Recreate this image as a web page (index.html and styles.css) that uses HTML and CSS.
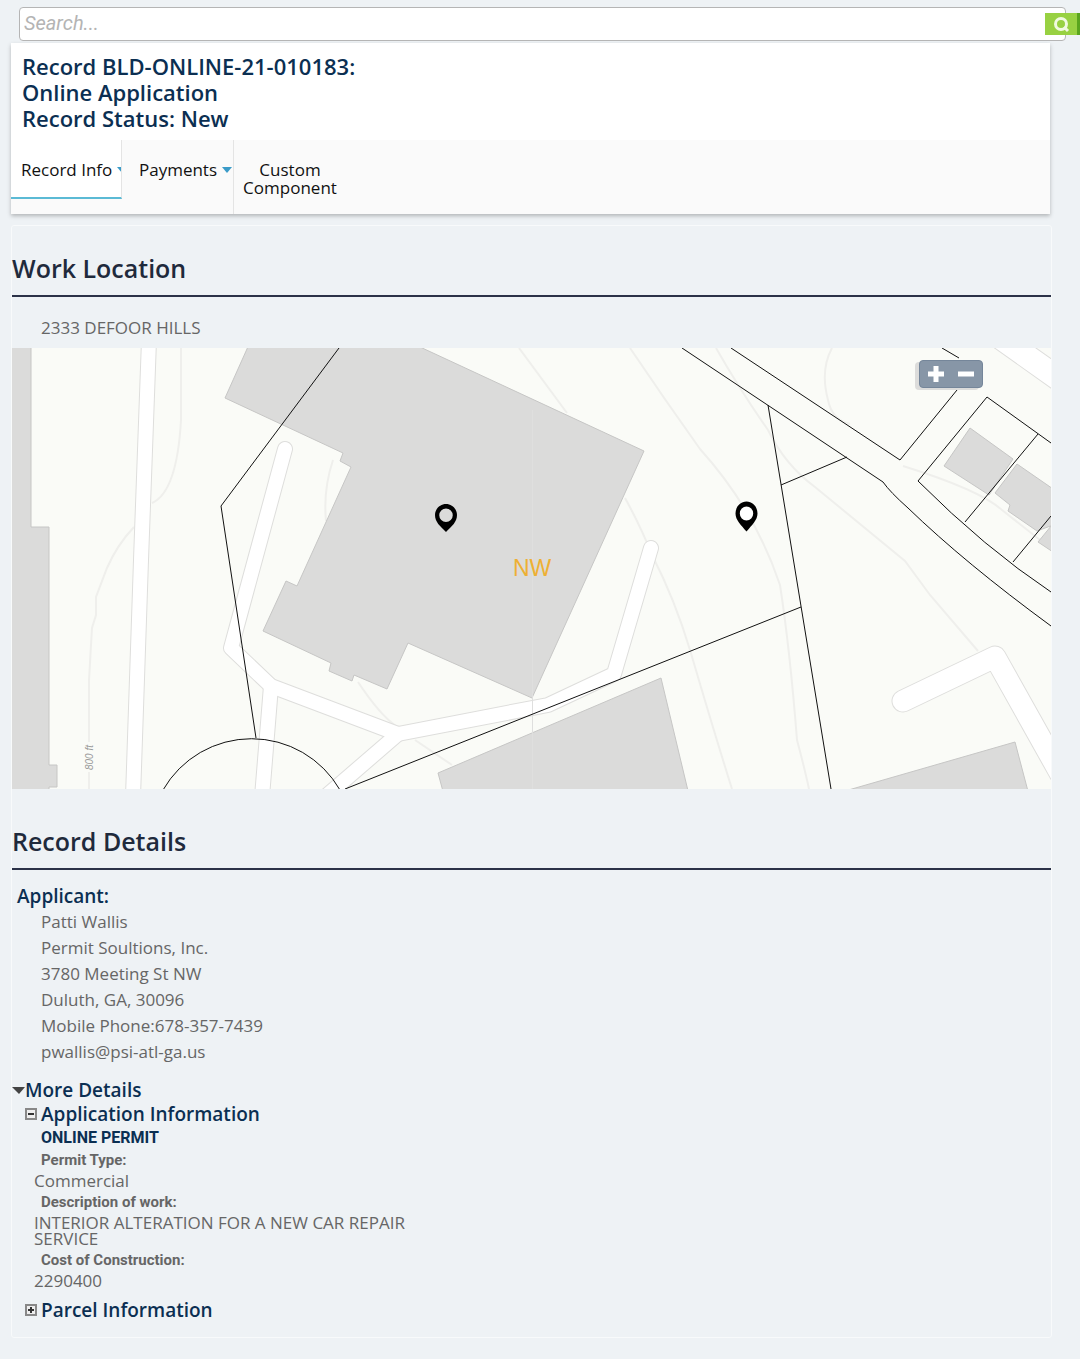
FILE: index.html
```html
<!DOCTYPE html>
<html lang="en">
<head>
  <meta charset="UTF-8">
  <meta name="viewport" content="width=device-width, initial-scale=1">
  <title>Record BLD-ONLINE-21-010183</title>
  <link rel="stylesheet" href="styles.css">
</head>
<body>

  <form class="search" role="search">
    <input type="text" class="search-input" placeholder="Search..." aria-label="Search">
    <button type="button" class="search-btn" aria-label="Search">
      <svg width="18" height="18" viewBox="0 0 18 18"><circle cx="9" cy="9" r="5.500"/><path d="M12 12L16 16"/></svg>
    </button>
  </form>

  <header class="record-header">
    <h1>Record BLD-ONLINE-21-010183:<br>Online Application<br>Record Status: New</h1>
    <nav class="tabs">
      <a href="#info" class="tab active">Record Info<span class="caret"></span></a>
      <a href="#payments" class="tab">Payments<span class="caret"></span></a>
      <a href="#custom" class="tab tab-wrap">Custom Component</a>
    </nav>
  </header>

  <main class="content">
    <section>
      <h2>Work Location</h2>
      <p class="address">2333 DEFOOR HILLS</p>
      <div class="map">
        <svg class="map-canvas" viewBox="12 348 1039 441" preserveAspectRatio="xMidYMid slice" role="img" aria-label="Map of 2333 Defoor Hills">
          <rect class="ground" x="12" y="348" width="1039" height="441"/>

          <!-- contour lines -->
          <g class="contour">
            <path d="M181 348V420Q177 492 152 503"/>
            <path d="M134 527Q117 545 107 568L96 597V615L92 628L89 680V742M89 772V789"/>
            <path d="M333 460Q323 490 326 521"/>
            <path d="M519 348L567 413M625 498Q640 525 653 557Q675 600 690 650Q715 735 732 789"/>
            <path d="M630 348Q665 400 700 449Q755 510 780 585Q790 650 797 740Q805 770 809 789"/>
            <path d="M716 348Q740 390 768 430Q785 465 815 487L905 561L930 595L978 651"/>
            <path d="M832 348Q820 370 828 400Q832 420 850 424M903 466Q980 490 1002 510L1040 540"/>
            <path d="M358 682Q380 715 396 726M415 740L452 765"/>
          </g>

          <!-- streets: grey casing under white fill -->
          <g class="road-edge">
            <path d="M149 340L141 560L133 797" stroke-width="16"/>
            <path d="M285 449L231 648L271 686L398 734L548 705L614 674L651 548" stroke-width="16"/>
            <path d="M271 686L262 797M398 734L325 797" stroke-width="16"/>
            <path d="M903 701L995 657L1060 773" stroke-width="23"/>
            <path d="M990 330L1070 387" stroke-width="25"/>
          </g>
          <g class="road">
            <path d="M149 340L141 560L133 797" stroke-width="14"/>
            <path d="M285 449L231 648L271 686L398 734L548 705L614 674L651 548" stroke-width="14"/>
            <path d="M271 686L262 797M398 734L325 797" stroke-width="14"/>
            <path d="M903 701L995 657L1060 773" stroke-width="21"/>
            <path d="M990 330L1070 387" stroke-width="23"/>
          </g>

          <g class="building">
            <path d="M10 340H31V527H49V765H57V787H49V795H10Z"/>
            <path d="M251 340L225 398L343 453L340 461L351 467L297 586L286 581L263 631L331 663L329 671L352 681L354 675L387 689L408 643L532 698L644 451L405 340Z"/>
            <path d="M444 795L438 773L661 678L689 795Z"/>
            <path d="M845 791L1015 742L1029 795Z"/>
            <path d="M970 428L1013 459L989 495L944 466Z"/>
            <path d="M1017 464L1056 491V524L1037 531L1008 511L1010 505L995 493Z"/>
            <path d="M1056 520L1038 542L1056 554Z"/>
          </g>
          <path class="tile-seam" d="M532.5 410V789"/>

          <!-- parcel boundaries -->
          <g class="parcel">
            <path d="M339 348L221 506L256 738"/>
            <path d="M163 790A102 102 0 0 1 340 790"/>
            <path d="M345 789L801 607"/>
            <path d="M768 405L831 789M781 485L847 457"/>
            <path d="M682 348L883 482Q890 492 908 508Q965 563 1051 626"/>
            <path d="M731 348L900 460L957 390M942 348L959 358"/>
            <path d="M1051 443L987 397L918 481Q985 548 1051 592"/>
            <path d="M1038 434L965 522M1051 516L1013 562"/>
          </g>

          <g class="pin">
            <path fill-rule="evenodd" d="M446 504C440 504 435 509 435 515C435 522 440 526 446 532C452 526 457 522 457 515C457 509 452 504 446 504ZM446 508.500A6.700 6.700 0 1 1 446 522A6.700 6.700 0 1 1 446 508.500Z"/>
            <path class="pin-hole" d="M746 507a7 7 0 1 0 .1 0Z"/>
            <path fill-rule="evenodd" d="M746.500 501.500C740 501.500 735.500 507 735.500 513.500C735.500 520 741 525 746.500 531.500C752 525 757.500 520 757.500 513.500C757.500 507 753 501.500 746.500 501.500ZM746.500 506.500A6.700 7 0 1 1 746.500 520.500A6.700 7 0 1 1 746.500 506.500Z"/>
          </g>
          <text class="quadrant" x="513" y="576">NW</text>
          <text class="elevation" transform="translate(93 770) rotate(-90)">800 ft</text>
        </svg>
        <div class="zoom">
          <button type="button" aria-label="Zoom in"><svg width="18" height="18" viewBox="0 0 18 18"><path d="M1 9H17M9 1V17"/></svg></button>
          <button type="button" aria-label="Zoom out"><svg width="18" height="18" viewBox="0 0 18 18"><path d="M1 9H17"/></svg></button>
        </div>
      </div>
    </section>

    <section class="details">
      <h2>Record Details</h2>
      <h3 class="applicant-title">Applicant:</h3>
      <address class="applicant">
        Patti Wallis<br>
        Permit Soultions, Inc.<br>
        3780 Meeting St NW<br>
        Duluth, GA, 30096<br>
        Mobile Phone:678-357-7439<br>
        pwallis@psi-atl-ga.us
      </address>

      <button type="button" class="toggle more" aria-expanded="true">
        <svg width="13" height="8" viewBox="0 0 13 8"><path d="M0 1H13L7 8Z" fill="#444"/></svg>More Details
      </button>
      <button type="button" class="toggle group" aria-expanded="true">
        <svg width="12" height="12" viewBox="0 0 12 12"><rect class="box" x="1" y="1" width="10" height="10"/><path class="sign" d="M3 6H9"/></svg>Application Information
      </button>
      <div class="app-info">
        <h4>ONLINE PERMIT</h4>
        <dl>
          <dt>Permit Type:</dt>
          <dd>Commercial</dd>
          <dt>Description of work:</dt>
          <dd>INTERIOR ALTERATION FOR A NEW CAR REPAIR SERVICE</dd>
          <dt>Cost of Construction:</dt>
          <dd>2290400</dd>
        </dl>
      </div>
      <button type="button" class="toggle group" aria-expanded="false">
        <svg width="12" height="12" viewBox="0 0 12 12"><rect class="box" x="1" y="1" width="10" height="10"/><path class="sign" d="M3 6H9M6 3V9"/></svg>Parcel Information
      </button>
    </section>
  </main>

</body>
</html>
```
FILE: styles.css
```css
* {
  box-sizing: border-box;
}

body {
  margin: 0;
  padding: 7px 28px 20px 11px;
  background: #eef2f5;
  color: #666;
  font-family: "Open Sans", "Noto Sans", sans-serif;
  font-size: 17px;
}

h1, h2, h3, h4, p, dl, dd {
  margin: 0;
}

button {
  border: 0;
  padding: 0;
  font-family: inherit;
  cursor: pointer;
}

/* search bar, runs a bit past the card on the right */
.search {
  position: relative;
  margin: 0 -14px 2px 8px;
}

.search-input {
  display: block;
  width: 100%;
  height: 34px;
  padding: 0 4px 2px;
  border: 1px solid #b5b5b5;
  border-radius: 4px;
  background: #fff;
  font: italic 20px Roboto, sans-serif;
}

.search-input::placeholder {
  color: #b4b4b4;
}

.search-btn {
  position: absolute;
  top: 6px;
  right: -14px;
  width: 35px;
  height: 22px;
  border-right: 3px solid #5aa51e;
  background: #98d142;
}

.search-btn svg {
  display: block;
  margin: auto;
  fill: none;
  stroke: #f0fae0;
  stroke-width: 3;
}

.record-header {
  margin-right: 2px;
  background: #fff;
  box-shadow: 0 2px 4px rgba(0, 0, 0, 0.25);
}

h1 {
  padding: 10px 11px 9px;
  color: #0b2f52;
  font-size: 22px;
  font-weight: 600;
  line-height: 26px;
}

.tabs {
  display: flex;
  align-items: flex-start;
  height: 74px;
  background: #fafafa;
}

.tab {
  display: flex;
  justify-content: center;
  width: 112px;
  height: 74px;
  padding-top: 21px;
  border-right: 1px solid #e4e4e4;
  overflow: hidden;
  color: #111;
  line-height: 18px;
  text-align: center;
  text-decoration: none;
  white-space: nowrap;
}

.tab.active {
  justify-content: flex-start;
  width: 111px;
  height: 59px;
  padding-left: 10px;
  border-bottom: 2px solid #5bbad5;
  background: #fff;
}

.tab:not(.active):not(.tab-wrap) {
  padding-left: 16px;
}

.tab-wrap {
  border-right: 0;
  white-space: normal;
}

.caret {
  flex: none;
  margin: 6px 0 0 5px;
  border: 5px solid transparent;
  border-top: 6px solid #3a9bc8;
  border-bottom: 0;
  height: 0;
}

.content {
  margin-top: 11px;
  padding-bottom: 15px;
  border: 1px solid #f8fafb;
  border-radius: 3px;
}

h2 {
  padding: 25px 0 10px;
  border-bottom: 2px solid #2b3248;
  color: #1f2a3c;
  font-size: 25px;
  font-weight: 600;
  line-height: 34px;
}

.address {
  padding: 20px 0 9px 29px;
  font-weight: 500;
  line-height: 22px;
}

.map {
  position: relative;
}

.map-canvas {
  display: block;
  width: 100%;
  height: 441px;
}

.ground {
  fill: #fafbf7;
}

.contour,
.road-edge,
.road,
.parcel {
  fill: none;
}

.contour {
  stroke: #efefec;
  stroke-width: 2;
}

.road-edge,
.road {
  stroke-linecap: round;
  stroke-linejoin: round;
}

.road-edge {
  stroke: #dededc;
}

.road {
  stroke: #fff;
}

.building {
  fill: #dbdbda;
  stroke: #c6c6c5;
  stroke-width: 1;
}

.tile-seam {
  stroke: #dfdfde;
}

.parcel {
  stroke: #111;
  stroke-width: 1;
}

.pin {
  fill: #000;
}

.pin .pin-hole {
  fill: #fff;
}

.quadrant {
  fill: #eeb033;
  font: 23px "Liberation Sans", sans-serif;
}

.elevation {
  fill: #999;
  font: italic 10px "Liberation Sans", sans-serif;
}

.zoom {
  position: absolute;
  top: 12px;
  right: 68px;
  display: flex;
  padding: 1px;
  border: 1px solid #75869a;
  border-radius: 4px;
  background: #8796a7;
  box-shadow: -4px 2px 0 #dcdcdb;
}

.zoom button {
  width: 30px;
  height: 24px;
  background: none;
}

.zoom svg {
  display: block;
  margin: auto;
  stroke: #fff;
  stroke-width: 5;
}

.details {
  padding-top: 10px;
}

.applicant-title {
  padding: 14px 0 0 5px;
  color: #0b2f52;
  font-size: 19px;
  font-weight: 600;
  line-height: 24px;
}

.applicant {
  padding: 1px 0 0 29px;
  font-style: normal;
  line-height: 26px;
}

.toggle {
  display: flex;
  align-items: center;
  background: none;
  color: #0b2f52;
  font-size: 19px;
  font-weight: 600;
  line-height: 24px;
}

.more {
  margin-top: 13px;
}

.group {
  gap: 4px;
  margin-left: 13px;
}

.box {
  fill: #eee;
  stroke: #888;
  stroke-width: 2;
}

.sign {
  stroke: #333;
  stroke-width: 2;
}

.app-info {
  width: 420px;
  padding: 0 0 6px 22px;
}

h4 {
  padding-left: 7px;
  color: #0b2f52;
  font: bold 16px/24px Roboto, sans-serif;
}

dt {
  padding: 0 0 1px 7px;
  font: bold 15px/20px Roboto, sans-serif;
}

dd {
  padding: 2px 0 3px;
  line-height: 16px;
}
```
